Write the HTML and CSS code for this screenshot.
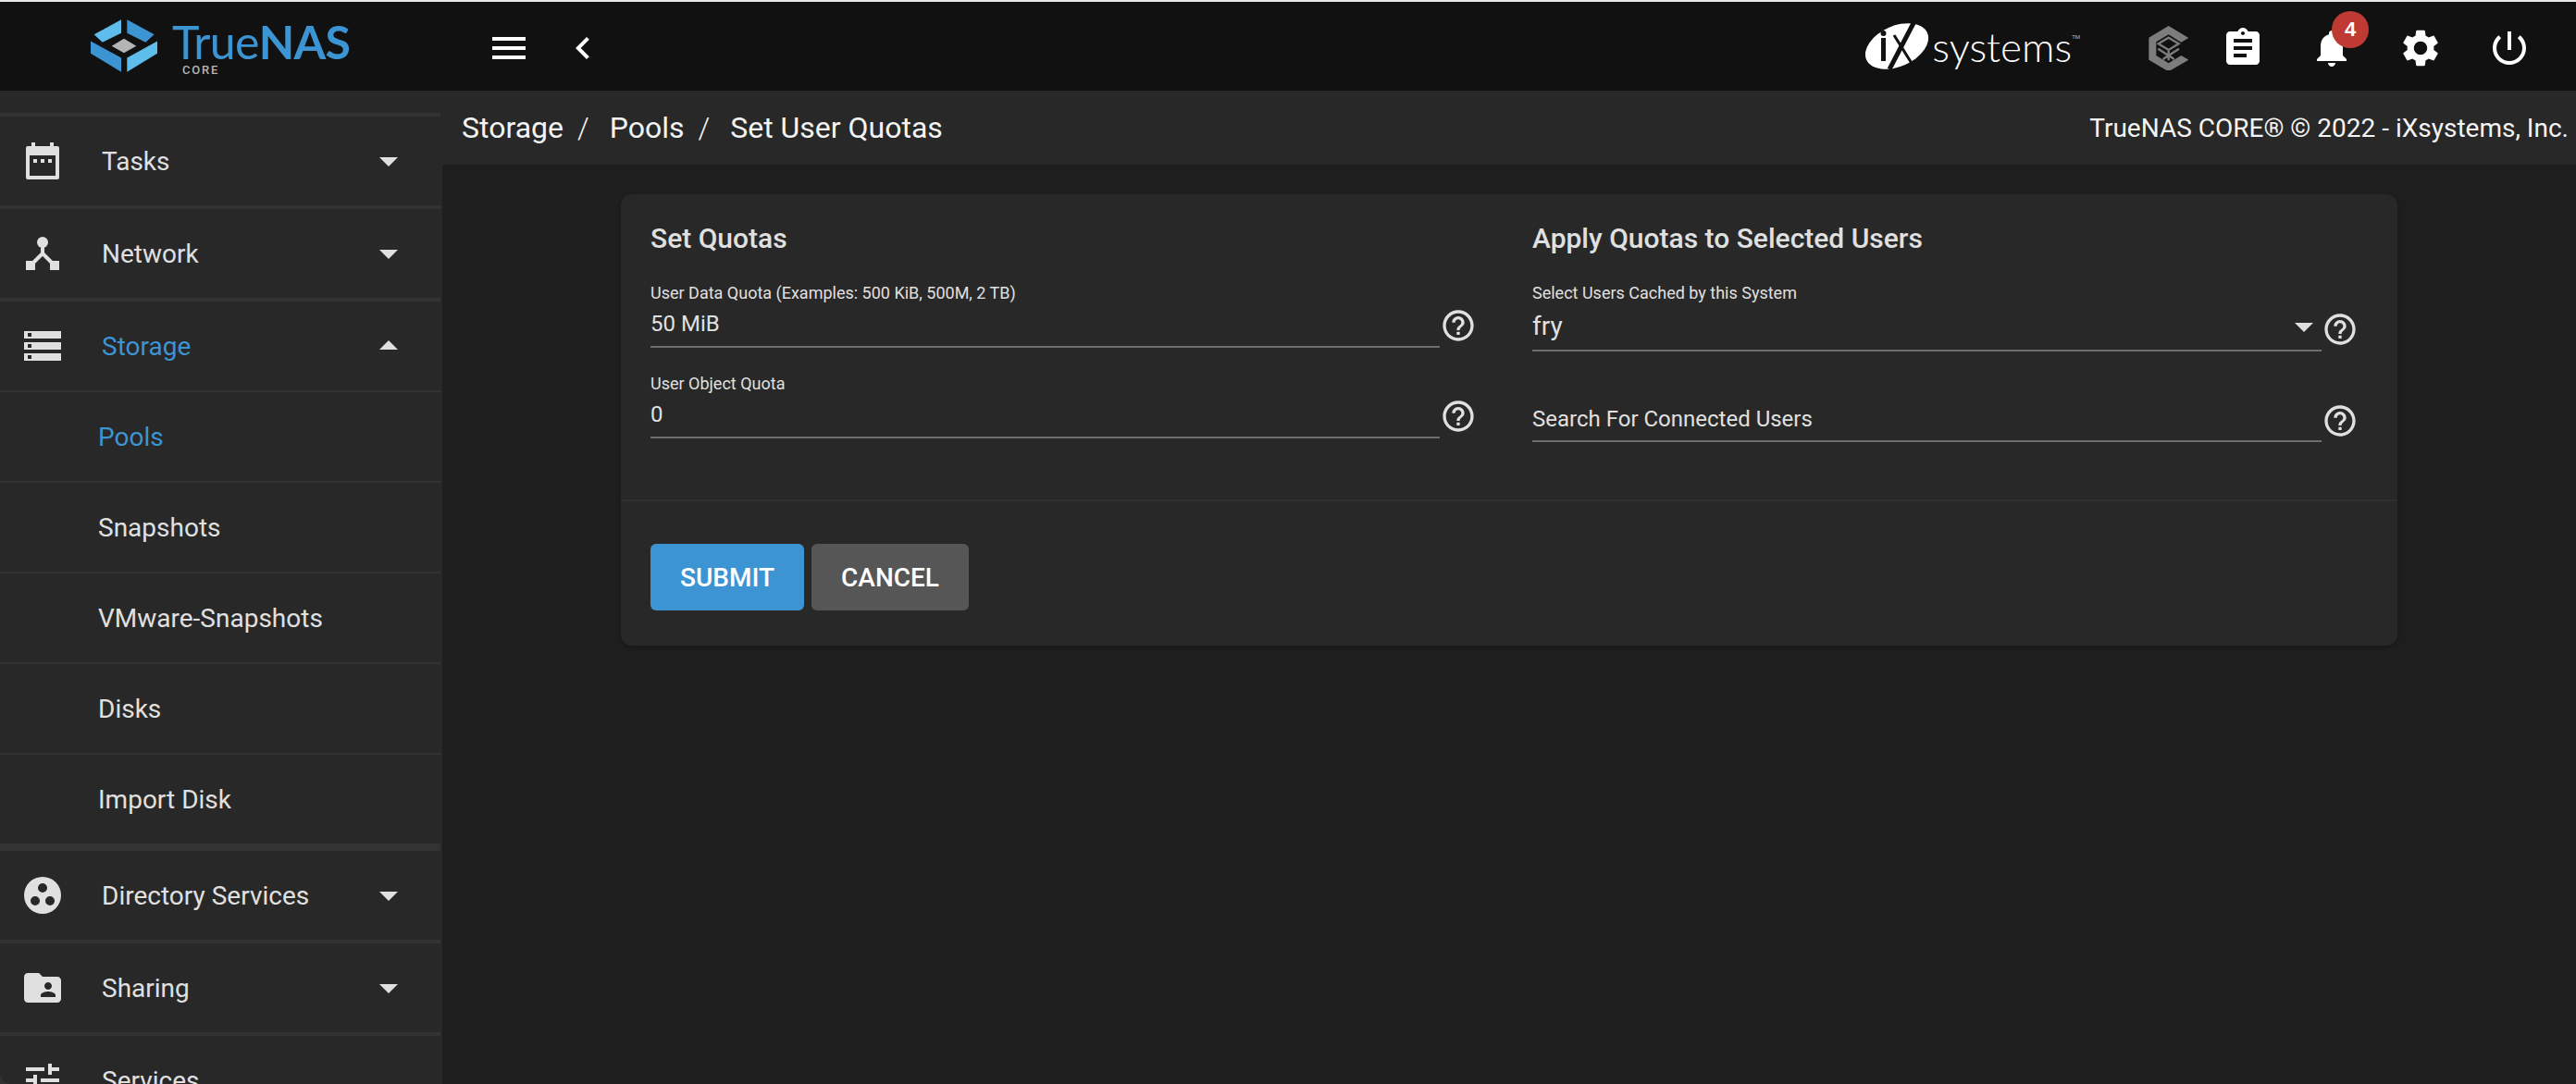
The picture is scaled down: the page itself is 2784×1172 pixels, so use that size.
FILE: index.html
```html
<!DOCTYPE html>
<html lang="en">
<head>
    <meta charset="UTF-8">
    <meta name="viewport" content="width=device-width, initial-scale=1.0">
    <title>Set User Quotas - TrueNAS CORE</title>
    <link rel="stylesheet" href="styles.css">
</head>
<body>
    <div class="app">
        <header class="topbar">
            <div class="brand">
                <svg class="brand-mark" viewBox="84 62 216 170">
                    <polygon class="mark-light" points="183,62 95,110 122,136 183,106"/>
                    <polygon class="mark-dark" points="202,62 290,110 262,136 202,106"/>
                    <polygon class="mark-dark" points="84,132 183,186 183,232 84,172"/>
                    <polygon class="mark-light" points="300,132 202,186 202,232 300,172"/>
                    <polygon class="mark-grey" points="192,124 232,148 192,170 152,148"/>
                </svg>
                <div class="brand-text">
                    <div class="brand-name">True<strong>NAS</strong></div>
                    <div class="brand-sub">CORE</div>
                </div>
            </div>
            <button class="icon-btn menu-btn">
                <svg viewBox="0 0 24 24"><path d="M3 18h18v-2H3v2zm0-5h18v-2H3v2zm0-7v2h18V6H3z"/></svg>
            </button>
            <button class="icon-btn back-btn">
                <svg viewBox="0 0 24 24"><path d="M15.41 7.41L14 6l-6 6 6 6 1.41-1.41L10.83 12z"/></svg>
            </button>

            <div class="topbar-right">
                <div class="ix-logo">
                    <svg class="ix-mark" viewBox="0 0 70 52">
                        <ellipse cx="35" cy="26" rx="36" ry="22" transform="rotate(-24 35 26)" fill="#fff"/>
                        <rect x="18" y="17" width="5" height="25" fill="#111"/>
                        <circle cx="20.500" cy="12" r="3" fill="#111"/>
                        <path d="M27 51L54 -1" stroke="#111" stroke-width="5"/>
                        <path d="M32 14L52 46" stroke="#111" stroke-width="3"/>
                    </svg>
                    <span class="ix-name">systems</span>
                    <span class="ix-tm">TM</span>
                </div>
                <button class="icon-btn stack-btn">
                    <svg class="stack-icon" viewBox="66 84 130 144">
                        <path fill="#7d7d7d" d="M130 84l65 39-24 14-41-25-40 24v44l40 25 41-25 24 14-65 38-64-38v-72z"/>
                        <path fill="none" stroke="#7d7d7d" stroke-width="7" d="M130 122l33 20-33 20-33-20zM130 162v34M96 158l34 22 34-22M112 192l18-12 18 12"/>
                    </svg>
                </button>
                <button class="icon-btn">
                    <svg viewBox="0 0 24 24"><path d="M19 3h-4.180C14.400 1.840 13.300 1 12 1c-1.300 0-2.400.840-2.820 2H5c-1.100 0-2 .900-2 2v14c0 1.100.900 2 2 2h14c1.100 0 2-.900 2-2V5c0-1.100-.900-2-2-2zm-7 0c.550 0 1 .450 1 1s-.450 1-1 1-1-.450-1-1 .450-1 1-1zm2 14H7v-2h7v2zm3-4H7v-2h10v2zm0-4H7V7h10v2z"/></svg>
                </button>
                <button class="icon-btn bell-btn">
                    <svg viewBox="0 0 24 24"><path d="M12 22c1.100 0 2-.900 2-2h-4c0 1.100.890 2 2 2zm6-6v-5c0-3.070-1.640-5.640-4.500-6.320V4c0-.830-.670-1.500-1.500-1.500s-1.500.670-1.500 1.500v.680C7.630 5.360 6 7.920 6 11v5l-2 2v1h16v-1l-2-2z"/></svg>
                    <span class="badge">4</span>
                </button>
                <button class="icon-btn">
                    <svg viewBox="0 0 24 24"><path d="M19.140 12.940c.040-.300.060-.610.060-.940 0-.320-.020-.640-.070-.940l2.030-1.580c.180-.140.230-.410.120-.610l-1.920-3.320c-.120-.220-.370-.290-.590-.220l-2.390.960c-.500-.380-1.030-.700-1.620-.940l-.360-2.540c-.040-.240-.240-.410-.480-.410h-3.840c-.240 0-.430.170-.470.410l-.360 2.540c-.590.240-1.130.570-1.620.940l-2.390-.960c-.220-.080-.470 0-.590.220L2.740 8.870c-.120.210-.080.470.120.610l2.030 1.580c-.050.300-.090.630-.090.940s.020.640.07.940l-2.030 1.580c-.180.140-.230.410-.120.610l1.920 3.320c.120.220.370.290.590.220l2.390-.960c.500.380 1.030.700 1.620.940l.360 2.540c.050.240.240.410.480.410h3.840c.240 0 .440-.170.470-.410l.360-2.540c.590-.240 1.130-.560 1.620-.940l2.390.960c.220.080.470 0 .590-.220l1.920-3.320c.120-.220.070-.470-.120-.610l-2.010-1.580zM12 15.600c-1.980 0-3.600-1.620-3.600-3.600s1.620-3.600 3.600-3.600 3.600 1.620 3.600 3.600-1.620 3.600-3.600 3.600z"/></svg>
                </button>
                <button class="icon-btn">
                    <svg viewBox="0 0 24 24"><path d="M13 3h-2v10h2V3zm4.830 2.170l-1.420 1.420C17.990 7.860 19 9.810 19 12c0 3.870-3.130 7-7 7s-7-3.130-7-7c0-2.190 1.010-4.140 2.580-5.420L6.170 5.170C4.230 6.820 3 9.260 3 12c0 4.970 4.030 9 9 9s9-4.030 9-9c0-2.740-1.230-5.180-3.170-6.830z"/></svg>
                </button>
            </div>
        </header>

        <div class="layout">
            <nav class="sidebar">
                <a class="nav-item">
                    <svg class="nav-icon" viewBox="0 0 48 48"><path fill-rule="evenodd" d="M12 4h4v4h16V4h4v4h4a2 2 0 0 1 2 2v32a2 2 0 0 1-2 2H8a2 2 0 0 1-2-2V10a2 2 0 0 1 2-2h4zM10 18v22h28V18zM14 22h4v4h-4zM22 22h4v4h-4zM30 22h4v4h-4z"/></svg>
                    <span class="nav-label">Tasks</span>
                    <svg class="nav-arrow" viewBox="0 0 24 24"><path d="M7 10l5 5 5-5z"/></svg>
                </a>
                <a class="nav-item">
                    <svg class="nav-icon" viewBox="0 0 48 48"><circle cx="24" cy="12" r="6"/><path d="M6 32h10v10H6zM32 32h10v10H32z"/><path d="M24 16v8M24 24L13 35M24 24l11 11" fill="none" stroke="#e0e0e0" stroke-width="4"/></svg>
                    <span class="nav-label">Network</span>
                    <svg class="nav-arrow" viewBox="0 0 24 24"><path d="M7 10l5 5 5-5z"/></svg>
                </a>
                <a class="nav-item is-active">
                    <svg class="nav-icon" viewBox="0 0 48 48"><path fill-rule="evenodd" d="M4 8h40v8H4zM8 10v4h4v-4zM4 20h40v8H4zM8 22v4h4v-4zM4 32h40v8H4zM8 34v4h4v-4z"/></svg>
                    <span class="nav-label">Storage</span>
                    <svg class="nav-arrow" viewBox="0 0 24 24"><path d="M7 14l5-5 5 5z"/></svg>
                </a>
                <div class="subnav">
                    <a class="subnav-item is-active">Pools</a>
                    <a class="subnav-item">Snapshots</a>
                    <a class="subnav-item">VMware-Snapshots</a>
                    <a class="subnav-item">Disks</a>
                    <a class="subnav-item">Import Disk</a>
                </div>
                <a class="nav-item">
                    <svg class="nav-icon" viewBox="0 0 48 48"><path fill-rule="evenodd" d="M24 4a20 20 0 1 0 0 40 20 20 0 0 0 0-40zM24 11a5 5 0 1 1 0 10 5 5 0 0 1 0-10zM16 25a5 5 0 1 1 0 10 5 5 0 0 1 0-10zM32 25a5 5 0 1 1 0 10 5 5 0 0 1 0-10z"/></svg>
                    <span class="nav-label">Directory Services</span>
                    <svg class="nav-arrow" viewBox="0 0 24 24"><path d="M7 10l5 5 5-5z"/></svg>
                </a>
                <a class="nav-item">
                    <svg class="nav-icon" viewBox="0 0 24 24"><path d="M20 6h-8l-2-2H4c-1.100 0-1.990.900-1.990 2L2 18c0 1.100.900 2 2 2h16c1.100 0 2-.900 2-2V8c0-1.100-.900-2-2-2zm-5 3c1.100 0 2 .900 2 2s-.900 2-2 2-2-.900-2-2 .900-2 2-2zm4 8h-8v-1c0-1.330 2.670-2 4-2s4 .670 4 2v1z"/></svg>
                    <span class="nav-label">Sharing</span>
                    <svg class="nav-arrow" viewBox="0 0 24 24"><path d="M7 10l5 5 5-5z"/></svg>
                </a>
                <a class="nav-item">
                    <svg class="nav-icon" viewBox="0 0 24 24"><path d="M3 17v2h6v-2H3zM3 5v2h10V5H3zm10 16v-2h8v-2h-8v-2h-2v6h2zM7 9v2H3v2h4v2h2V9H7zm14 4v-2H11v2h10zm-6-4h2V7h4V5h-4V3h-2v6z"/></svg>
                    <span class="nav-label">Services</span>
                </a>
            </nav>

            <main class="content">
                <div class="pagebar">
                    <div class="crumbs">
                        <span>Storage</span><span class="crumb-sep">/</span>
                        <span>Pools</span><span class="crumb-sep">/</span>
                        <span>Set User Quotas</span>
                    </div>
                    <div class="copyright">TrueNAS CORE® © 2022 - iXsystems, Inc.</div>
                </div>

                <section class="card">
                    <div class="card-body">
                        <div class="column">
                            <h3>Set Quotas</h3>
                            <div class="field-row">
                                <div class="field">
                                    <label>User Data Quota (Examples: 500 KiB, 500M, 2 TB)</label>
                                    <div class="value">50 MiB</div>
                                </div>
                                <svg class="help" viewBox="0 0 24 24"><path d="M11 18h2v-2h-2v2zm1-16C6.480 2 2 6.480 2 12s4.480 10 10 10 10-4.480 10-10S17.520 2 12 2zm0 18c-4.410 0-8-3.590-8-8s3.590-8 8-8 8 3.590 8 8-3.590 8-8 8zm0-14c-2.210 0-4 1.790-4 4h2c0-1.100.900-2 2-2s2 .900 2 2c0 2-3 1.750-3 5h2c0-2.250 3-2.500 3-5 0-2.210-1.790-4-4-4z"/></svg>
                            </div>
                            <div class="field-row">
                                <div class="field">
                                    <label>User Object Quota</label>
                                    <div class="value">0</div>
                                </div>
                                <svg class="help" viewBox="0 0 24 24"><path d="M11 18h2v-2h-2v2zm1-16C6.480 2 2 6.480 2 12s4.480 10 10 10 10-4.480 10-10S17.520 2 12 2zm0 18c-4.410 0-8-3.590-8-8s3.590-8 8-8 8 3.590 8 8-3.590 8-8 8zm0-14c-2.210 0-4 1.790-4 4h2c0-1.100.900-2 2-2s2 .900 2 2c0 2-3 1.750-3 5h2c0-2.250 3-2.500 3-5 0-2.210-1.790-4-4-4z"/></svg>
                            </div>
                        </div>
                        <div class="column">
                            <h3>Apply Quotas to Selected Users</h3>
                            <div class="field-row field-row--select">
                                <div class="field">
                                    <label>Select Users Cached by this System</label>
                                    <div class="value">fry
                                        <svg class="select-arrow" viewBox="0 0 24 24"><path d="M7 10l5 5 5-5z"/></svg>
                                    </div>
                                </div>
                                <svg class="help" viewBox="0 0 24 24"><path d="M11 18h2v-2h-2v2zm1-16C6.480 2 2 6.480 2 12s4.480 10 10 10 10-4.480 10-10S17.520 2 12 2zm0 18c-4.410 0-8-3.590-8-8s3.590-8 8-8 8 3.590 8 8-3.590 8-8 8zm0-14c-2.210 0-4 1.790-4 4h2c0-1.100.900-2 2-2s2 .900 2 2c0 2-3 1.750-3 5h2c0-2.250 3-2.500 3-5 0-2.210-1.790-4-4-4z"/></svg>
                            </div>
                            <div class="field-row field-row--search">
                                <div class="field">
                                    <div class="value">Search For Connected Users</div>
                                </div>
                                <svg class="help" viewBox="0 0 24 24"><path d="M11 18h2v-2h-2v2zm1-16C6.480 2 2 6.480 2 12s4.480 10 10 10 10-4.480 10-10S17.520 2 12 2zm0 18c-4.410 0-8-3.590-8-8s3.590-8 8-8 8 3.590 8 8-3.590 8-8 8zm0-14c-2.210 0-4 1.790-4 4h2c0-1.100.900-2 2-2s2 .900 2 2c0 2-3 1.750-3 5h2c0-2.250 3-2.500 3-5 0-2.210-1.790-4-4-4z"/></svg>
                            </div>
                        </div>
                    </div>
                    <div class="card-actions">
                        <button class="btn btn-primary">SUBMIT</button>
                        <button class="btn btn-default">CANCEL</button>
                    </div>
                </section>
            </main>
        </div>
    </div>
</body>
</html>
```

FILE: styles.css
```css
:root {
    --blue: #3d94d2;
    --blue-light: #5fbdec;
    --text: #e0e0e0;
    --bar: #111111;
    --panel: #282828;
    --page: #1e1e1e;
    --line: #333333;
    --underline: #6e6e6e;
}
* {
    box-sizing: border-box;
}
html, body {
    height: 100%;
}
body {
    margin: 0;
    overflow: hidden;
    background-color: #333333;
    color: var(--text);
    font-family: Roboto, "Liberation Sans", sans-serif;
}
.app {
    height: 1172px;
    display: flex;
    flex-direction: column;
    border-top: 2px solid #e8e8e8;
    border-bottom-left-radius: 12px;
    overflow: hidden;
}

/* top bar */
.topbar {
    flex: none;
    height: 96px;
    display: flex;
    align-items: center;
    background-color: var(--bar);
}
.brand {
    width: 526px;
    height: 96px;
    display: flex;
    padding-left: 98px;
}
.brand-mark {
    width: 72px;
    height: 57px;
    margin-top: 19px;
}
.mark-light { fill: var(--blue-light); }
.mark-dark { fill: var(--blue); }
.mark-grey { fill: #b5b5b5; }
.brand-text {
    margin-left: 16px;
}
.brand-name {
    margin-top: 21px;
    font-family: Lato, sans-serif;
    font-size: 50px;
    line-height: 44px;
    font-weight: 400;
    letter-spacing: -0.700px;
    color: var(--blue);
}
.brand-name strong {
    font-weight: 700;
}
.brand-sub {
    margin: 2px 0 0 11px;
    font-size: 13px;
    line-height: 14px;
    font-weight: 500;
    letter-spacing: 1.800px;
    color: #b5b5b5;
}
.icon-btn {
    position: relative;
    flex: none;
    width: 48px;
    height: 48px;
    margin-top: 4px;
    padding: 0;
    border: none;
    background: none;
}
.icon-btn svg {
    display: block;
    width: 48px;
    height: 48px;
    fill: #fff;
}
.back-btn {
    margin-left: 32px;
}
.topbar-right {
    margin-left: auto;
    margin-right: 48px;
    display: flex;
    align-items: center;
    gap: 48px;
}
.ix-logo {
    display: flex;
    align-items: center;
    margin-right: 24px;
    height: 60px;
}
.ix-mark {
    width: 70px;
    height: 52px;
}
.ix-name {
    margin-left: 3px;
    font-family: Lato, sans-serif;
    font-size: 44px;
    font-weight: 300;
    color: #fff;
    line-height: 44px;
}
.ix-tm {
    align-self: flex-start;
    margin-top: 16px;
    font-size: 6px;
    color: #bbb;
}
.stack-btn {
    margin-right: -16px;
}
.stack-btn .stack-icon {
    width: 44px;
    height: 48px;
    margin-left: 2px;
}
.bell-btn .badge {
    position: absolute;
    left: 24px;
    top: -16px;
    width: 40px;
    height: 40px;
    border-radius: 50%;
    background-color: #bf3a32;
    color: #fff;
    font-size: 22px;
    font-weight: 700;
    line-height: 40px;
    text-align: center;
}

/* layout */
.layout {
    flex: 1;
    display: flex;
    min-height: 0;
}
.sidebar {
    flex: none;
    width: 478px;
    padding: 24px 2px 0 0;
    background-color: var(--panel);
    overflow: hidden;
}
.nav-item {
    height: 100px;
    display: flex;
    align-items: center;
    padding-right: 32px;
    border-top: 4px solid var(--line);
    font-size: 28px;
}
.nav-icon {
    flex: none;
    width: 48px;
    height: 48px;
    margin-left: 22px;
    fill: var(--text);
}
.nav-label {
    flex: 1;
    margin-left: 40px;
}
.nav-arrow {
    flex: none;
    width: 48px;
    height: 48px;
    fill: var(--text);
}
.nav-item.is-active .nav-label,
.subnav-item.is-active {
    color: var(--blue);
}
.subnav {
    border-bottom: 4px solid var(--line);
}
.subnav-item {
    display: flex;
    align-items: center;
    height: 98px;
    padding-left: 106px;
    border-top: 2px solid var(--line);
    font-size: 28px;
}

/* content */
.content {
    flex: 1;
    min-width: 0;
    background-color: var(--page);
}
.pagebar {
    height: 80px;
    display: flex;
    align-items: center;
    justify-content: space-between;
    padding: 0 8px 0 21px;
    background-color: var(--panel);
    color: #f4f4f4;
}
.crumbs {
    display: flex;
    font-size: 32px;
}
.crumb-sep {
    margin: 0 22px 0 15px;
    font-weight: 300;
}
.copyright {
    font-size: 28px;
}
.card {
    width: 1920px;
    height: 488px;
    margin: 32px auto 0;
    border-radius: 12px;
    background-color: var(--panel);
    box-shadow: 0 2px 4px rgba(0,0,0,0.2);
}
.card-body {
    height: 332px;
    display: flex;
    gap: 60px;
    padding: 28px 0 0 32px;
    border-bottom: 2px solid #2f2f2f;
}
.column {
    width: 893px;
}
h3 {
    margin: 0 0 27px;
    font-size: 30px;
    line-height: 40px;
    font-weight: 500;
}
.field-row {
    display: flex;
    align-items: flex-start;
    margin-bottom: 27px;
}
.field {
    flex: 1;
    padding-bottom: 9px;
    border-bottom: 2px solid var(--underline);
}
label {
    display: block;
    font-size: 18px;
    line-height: 24px;
}
.value {
    position: relative;
    margin-top: 6px;
    font-size: 24px;
    line-height: 30px;
}
.help {
    flex: none;
    width: 40px;
    height: 40px;
    margin-top: 27px;
    fill: var(--text);
}
.field-row--select {
    margin-bottom: 23px;
}
.field-row--select .field {
    padding-bottom: 10px;
}
.field-row--select .value {
    margin-top: 9px;
    font-size: 28px;
}
.field-row--select .help {
    margin-top: 31px;
}
.select-arrow {
    position: absolute;
    right: -5px;
    top: -9px;
    width: 48px;
    height: 48px;
    fill: var(--text);
}
.field-row--search .field {
    padding: 35px 0 8px;
}
.field-row--search .value {
    margin-top: 0;
}
.field-row--search .help {
    margin-top: 32px;
}
.card-actions {
    display: flex;
    gap: 8px;
    padding: 46px 0 0 32px;
}
.btn {
    height: 72px;
    padding: 0;
    border: none;
    border-radius: 6px;
    color: #fff;
    font-family: inherit;
    font-size: 28px;
    font-weight: 500;
}
.btn-primary {
    width: 166px;
    background-color: var(--blue);
}
.btn-default {
    width: 170px;
    background-color: #565656;
}
```
